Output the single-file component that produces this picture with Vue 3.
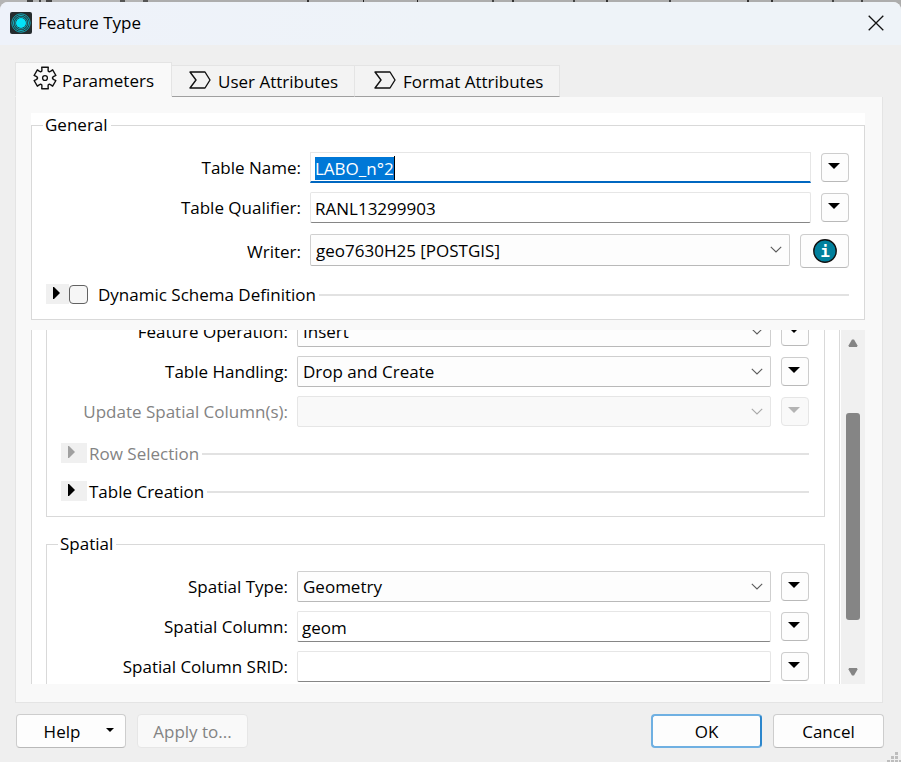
<script setup>
import { onMounted, ref } from 'vue'

const tableName = ref('LABO_n°2')
const tableQualifier = ref('RANL13299903')
const spatialColumn = ref('geom')
const srid = ref('')
const dynamicSchema = ref(false)
const nameInput = ref(null)

const operations = [
  { id: 'feature-operation', label: 'Feature Operation:', value: 'Insert' },
  { id: 'table-handling', label: 'Table Handling:', value: 'Drop and Create' },
  { id: 'update-columns', label: 'Update Spatial Column(s):', value: '', disabled: true }
]

// Outline of a six-toothed gear centred on the origin
function gearPath() {
  const points = []
  for (let i = 0; i < 6; i++) {
    const steps = [[7.6, -25], [9, -20], [11.2, -17], [11.2, 17], [9, 20], [7.6, 25]]
    for (const [r, offset] of steps) {
      const a = ((i * 60 - 90 + offset) * Math.PI) / 180
      points.push(`${(r * Math.cos(a)).toFixed(2)} ${(r * Math.sin(a)).toFixed(2)}`)
    }
  }
  return `M${points.join('L')}Z`
}
const gear = gearPath()

onMounted(() => {
  nameInput.value.focus()
  nameInput.value.select()
})
</script>

<template>
  <div class="backdrop">
    <main class="dialog">
      <header class="titlebar">
        <svg class="app-icon" viewBox="0 0 22 22" aria-hidden="true">
          <rect width="22" height="22" rx="2" fill="#252c2e" />
          <g fill="none" stroke="#12b5c6" stroke-width="0.9">
            <circle cx="11" cy="11" r="9.2" />
            <circle cx="11" cy="11" r="7.6" />
            <circle cx="11" cy="11" r="6" />
          </g>
          <circle cx="11" cy="11" r="5" fill="#05e3f8" />
        </svg>
        <h1>Feature Type</h1>
        <button class="close" type="button" aria-label="Close">
          <svg viewBox="0 0 16 16"><path d="M.7 .7 15.3 15.3M15.3 .7 .7 15.3" /></svg>
        </button>
      </header>

      <div class="content">
        <nav class="tabs" role="tablist">
          <button class="tab active" type="button" role="tab" aria-selected="true">
            <svg class="gear" viewBox="-12 -12 24 24">
              <path :d="gear" />
              <circle r="2.4" />
            </svg>
            <span>Parameters</span>
          </button>
          <button class="tab" type="button" role="tab" aria-selected="false">
            <svg class="tag" viewBox="0 0 22 18"><path d="M1 1H16L21 9 16 17H1L7 9Z" /></svg>
            <span>User Attributes</span>
          </button>
          <button class="tab" type="button" role="tab" aria-selected="false">
            <svg class="tag" viewBox="0 0 22 18"><path d="M1 1H16L21 9 16 17H1L7 9Z" /></svg>
            <span>Format Attributes</span>
          </button>
        </nav>

        <section class="panel">
          <div class="surface">
            <fieldset class="group general">
              <legend>General</legend>
              <div class="rows">
                <div class="row">
                  <label for="table-name">Table Name:</label>
                  <div class="field">
                    <input id="table-name" ref="nameInput" v-model="tableName" class="text focused" type="text" />
                    <span class="caret"></span>
                  </div>
                  <button class="more" type="button" aria-label="Table name options">
                    <svg viewBox="0 0 12 6"><path d="M0 0H12L6 6Z" /></svg>
                  </button>
                </div>
                <div class="row">
                  <label for="table-qualifier">Table Qualifier:</label>
                  <div class="field">
                    <input id="table-qualifier" v-model="tableQualifier" class="text" type="text" />
                  </div>
                  <button class="more" type="button" aria-label="Table qualifier options">
                    <svg viewBox="0 0 12 6"><path d="M0 0H12L6 6Z" /></svg>
                  </button>
                </div>
                <div class="row writer">
                  <label for="writer">Writer:</label>
                  <div class="field">
                    <select id="writer"><option>geo7630H25 [POSTGIS]</option></select>
                    <svg class="chevron" viewBox="0 0 12 7"><path d="M.8 .8 6 6 11.2 .8" /></svg>
                  </div>
                  <button class="info" type="button" aria-label="Writer information">
                    <svg viewBox="0 0 24 24">
                      <circle cx="12" cy="12" r="11.2" />
                      <text x="12" y="18" text-anchor="middle">i</text>
                    </svg>
                  </button>
                </div>
              </div>
              <div class="expander dynamic">
                <button class="toggle" type="button" aria-label="Expand dynamic schema definition">
                  <svg viewBox="0 0 7 12"><path d="M0 0H1L7 6 1 12H0Z" /></svg>
                </button>
                <input id="dynamic" v-model="dynamicSchema" type="checkbox" />
                <label class="caption" for="dynamic">Dynamic Schema Definition</label>
                <span class="line"></span>
              </div>
            </fieldset>
          </div>

          <div class="scroll-area">
            <div class="viewport">
              <fieldset class="group inner continued">
                <div class="rows">
                  <div v-for="item in operations" :key="item.id" class="row" :class="{ disabled: item.disabled }">
                    <label :for="item.id">{{ item.label }}</label>
                    <div class="field">
                      <select :id="item.id" :disabled="item.disabled"><option>{{ item.value }}</option></select>
                      <svg class="chevron" viewBox="0 0 12 7"><path d="M.8 .8 6 6 11.2 .8" /></svg>
                    </div>
                    <button class="more" type="button" :disabled="item.disabled" :aria-label="item.label">
                      <svg viewBox="0 0 12 6"><path d="M0 0H12L6 6Z" /></svg>
                    </button>
                  </div>
                </div>
                <div class="expanders">
                  <div class="expander disabled">
                    <button class="toggle" type="button" disabled aria-labelledby="row-selection">
                      <svg viewBox="0 0 7 12"><path d="M0 0H1L7 6 1 12H0Z" /></svg>
                    </button>
                    <span id="row-selection" class="caption">Row Selection</span>
                    <span class="line"></span>
                  </div>
                  <div class="expander">
                    <button class="toggle" type="button" aria-labelledby="table-creation">
                      <svg viewBox="0 0 7 12"><path d="M0 0H1L7 6 1 12H0Z" /></svg>
                    </button>
                    <span id="table-creation" class="caption">Table Creation</span>
                    <span class="line"></span>
                  </div>
                </div>
              </fieldset>

              <fieldset class="group inner spatial">
                <legend>Spatial</legend>
                <div class="rows">
                  <div class="row">
                    <label for="spatial-type">Spatial Type:</label>
                    <div class="field">
                      <select id="spatial-type"><option>Geometry</option></select>
                      <svg class="chevron" viewBox="0 0 12 7"><path d="M.8 .8 6 6 11.2 .8" /></svg>
                    </div>
                    <button class="more" type="button" aria-label="Spatial type options">
                      <svg viewBox="0 0 12 6"><path d="M0 0H12L6 6Z" /></svg>
                    </button>
                  </div>
                  <div class="row">
                    <label for="spatial-column">Spatial Column:</label>
                    <div class="field">
                      <input id="spatial-column" v-model="spatialColumn" class="text" type="text" />
                    </div>
                    <button class="more" type="button" aria-label="Spatial column options">
                      <svg viewBox="0 0 12 6"><path d="M0 0H12L6 6Z" /></svg>
                    </button>
                  </div>
                  <div class="row">
                    <label for="srid">Spatial Column SRID:</label>
                    <div class="field">
                      <input id="srid" v-model="srid" class="text" type="text" />
                    </div>
                    <button class="more" type="button" aria-label="Spatial column SRID options">
                      <svg viewBox="0 0 12 6"><path d="M0 0H12L6 6Z" /></svg>
                    </button>
                  </div>
                </div>
              </fieldset>
            </div>
            <div class="scrollbar" aria-hidden="true">
              <svg viewBox="0 0 10 8"><path d="M4 .5H6L9.5 6.5 9 8H1L.5 6.5Z" /></svg>
              <div class="track"><div class="thumb"></div></div>
              <svg viewBox="0 0 10 8"><path d="M4 7.5H6L9.5 1.5 9 0H1L.5 1.5Z" /></svg>
            </div>
          </div>
        </section>

        <footer class="actions">
          <button class="btn help" type="button">
            <span>Help</span>
            <svg viewBox="0 0 8 4"><path d="M0 0H8L4 4Z" /></svg>
          </button>
          <button class="btn" type="button" disabled>Apply to...</button>
          <span class="spacer"></span>
          <button class="btn primary" type="button">OK</button>
          <button class="btn" type="button">Cancel</button>
        </footer>
      </div>

      <svg class="grip" viewBox="0 0 14 10" aria-hidden="true">
        <path d="M8 0h3v3h-3zM4 4h3v3h-3zM8 4h3v3h-3zM0 8h3v2h-3zM4 8h3v2h-3zM8 8h3v2h-3zM12 8h2v2h-2z" />
      </svg>
    </main>
  </div>
</template>

<style>
body {
  margin: 0;
}
</style>

<style scoped>
* {
  box-sizing: border-box;
}

.backdrop {
  height: 100vh;
  min-height: 600px;
  padding-top: 2px;
  display: flex;
  background: linear-gradient(90deg,
    #b4b4b4 27px, #444 27px 33px, #b4b4b4 33px 39px, #444 39px 41px, #b4b4b4 41px 46px, #444 46px 52px,
    #b4b4b4 52px 120px, #555 120px 125px, #b4b4b4 125px 143px, #555 143px 148px,
    #adadad 148px 307px, #333 307px 309px, #adadad 309px 363px, #222 363px 364px, #adadad 364px 417px,
    #222 417px 418px, #adadad 418px 492px, #444 492px 494px, #adadad 494px 512px, #333 512px 514px,
    #adadad 514px 573px, #444 573px 575px, #adadad 575px 606px, #333 606px 608px, #adadad 608px 669px,
    #444 669px 671px, #b4b4b4 671px 747px, #333 747px 749px, #adadad 749px 771px, #333 771px 773px,
    #adadad 773px 832px, #444 832px 834px, #adadad 834px 861px, #444 861px 863px, #adadad 863px);
  font-family: "Open Sans", "Noto Sans", sans-serif;
  font-size: 17px;
  line-height: 24px;
  color: #000;
}

button,
input,
select {
  font: inherit;
  color: inherit;
  margin: 0;
}

button {
  padding: 0;
  display: flex;
  align-items: center;
  justify-content: center;
}

.dialog {
  position: relative;
  flex: 1;
  min-width: 0;
  display: flex;
  flex-direction: column;
  background: #efefef;
  border-radius: 8px 8px 0 0;
  overflow: hidden;
}

.titlebar {
  display: flex;
  align-items: center;
  height: 43px;
  padding: 0 17px 2px 10px;
  background: linear-gradient(90deg, #eef2fa, #eef3f8 50%);
}

.app-icon {
  width: 22px;
  height: 22px;
}

h1 {
  flex: 1;
  margin: 0 0 0 6px;
  font-size: 17px;
  font-weight: 400;
}

.close {
  border: 0;
  background: none;
}

.close svg {
  width: 16px;
  height: 16px;
  fill: none;
  stroke: #111;
  stroke-width: 1.3;
}

.content {
  flex: 1;
  min-height: 0;
  display: flex;
  flex-direction: column;
  padding: 17px 18px 14px 15px;
}

.tabs {
  display: flex;
  align-items: flex-end;
}

.tab {
  height: 32px;
  gap: 7px;
  padding: 2px 16px 0 17px;
  background: #f3f3f3;
  border: 1px solid #e4e4e4;
  border-bottom-color: #a0a0a0;
  border-left-width: 0;
}

.tab:last-child {
  padding-left: 19px;
}

.tab.active {
  height: 35px;
  gap: 5px;
  padding: 2px 17px 0 17px;
  background: #f9f9f9;
  border-left-width: 1px;
  border-bottom-color: #f9f9f9;
}

.tab svg {
  fill: none;
  stroke: #111;
  stroke-width: 1.4;
  stroke-linejoin: round;
}

.gear {
  width: 24px;
  height: 24px;
  margin-bottom: 6px;
}

.tag {
  width: 22px;
  height: 18px;
  margin-bottom: 4px;
}

.panel {
  flex: 1;
  min-height: 0;
  display: flex;
  flex-direction: column;
  gap: 10px;
  padding: 16px 17px 18px 15px;
  background: #f9f9f9;
  border: 1px solid #e4e4e4;
  border-top: 0;
}

.surface {
  background: #fff;
}

.group {
  min-width: 0;
  margin: 0;
  padding: 0 15px 15px 14px;
  border: 1px solid #d9d9d9;
}

legend {
  margin-left: -3px;
  padding: 0 3px 0 2px;
}

.general .rows {
  padding-top: 15px;
}

.rows {
  display: flex;
  flex-direction: column;
  gap: 9px;
}

.row {
  display: flex;
  align-items: center;
  gap: 10px;
  height: 31px;
}

.row.writer {
  height: 34px;
  margin-top: 2px;
}

.row > label {
  width: 255px;
  flex: none;
  margin-right: -1px;
  padding-top: 1px;
  text-align: right;
  white-space: nowrap;
}

.inner .row > label {
  width: 227px;
}

.field {
  position: relative;
  flex: 1;
  min-width: 0;
  display: flex;
}

.text,
select {
  width: 100%;
  height: 31px;
  border-radius: 2px;
  outline: 0;
}

.text {
  padding: 2px 4px 0;
  background: #fff;
  border: 1px solid #e6e6e6;
  border-bottom-color: #868686;
}

.text.focused {
  border-bottom: 2px solid #0067c0;
  border-radius: 0;
}

.text::selection {
  color: #fff;
  background: #0078d7;
}

.caret {
  position: absolute;
  left: 84px;
  top: 4px;
  width: 1px;
  height: 24px;
  background: #000;
}

select {
  appearance: none;
  padding: 1px 30px 0 5px;
  background: #fdfdfd;
  border: 1px solid #cfcfcf;
  border-bottom-color: #b9b9b9;
}

.writer select {
  height: 32px;
}

.writer .field {
  align-self: flex-start;
}

select:disabled {
  background: #f9f9f9;
  border-color: #e6e6e6;
  opacity: 1;
}

.chevron {
  position: absolute;
  right: 8px;
  top: 12px;
  width: 12px;
  height: 7px;
  fill: none;
  stroke: #5c5c5c;
  stroke-width: 1.1;
  pointer-events: none;
}

.disabled .chevron {
  stroke: #a8a8a8;
}

.disabled {
  color: #838383;
}

.more {
  width: 28px;
  height: 29px;
  flex: none;
  padding: 0 2px 4px 0;
  background: #fdfdfd;
  border: 1px solid #cdcdcd;
  border-bottom-color: #b9b9b9;
  border-radius: 4px;
}

.more svg {
  width: 12px;
  height: 6px;
}

.more:disabled {
  background: #f9f9f9;
  border-color: #e6e6e6;
}

.more:disabled svg {
  fill: #b4b4b4;
}

.info {
  width: 49px;
  height: 34px;
  flex: none;
  background: #fdfdfd;
  border: 1px solid #cdcdcd;
  border-bottom-color: #b9b9b9;
  border-radius: 4px;
}

.info svg {
  width: 24px;
  height: 24px;
}

.info circle {
  fill: #00809d;
  stroke: #111;
  stroke-width: 1.4;
}

.info text {
  fill: #fff;
  font: 700 16px "DejaVu Sans Mono", monospace;
}

.expander {
  display: flex;
  align-items: center;
  height: 20px;
  white-space: nowrap;
}

.expander.dynamic {
  margin-top: 16px;
}

.expanders {
  display: flex;
  flex-direction: column;
  gap: 18px;
  padding-top: 16px;
}

.caption {
  padding-top: 2px;
}

.toggle {
  width: 26px;
  height: 20px;
  margin-right: 2px;
  padding: 0 6px 2px 0;
  border: 0;
  background: #f0f0f0;
}

.dynamic .toggle {
  width: 23px;
  margin-right: 0;
  padding-right: 2px;
}

.toggle svg {
  width: 7px;
  height: 12px;
}

.toggle:disabled svg {
  fill: #a0a0a0;
}

input[type="checkbox"] {
  appearance: none;
  width: 19px;
  height: 19px;
  margin-right: 10px;
  background: #f6f6f6;
  border: 1px solid #626262;
  border-radius: 4px;
}

.line {
  flex: 1;
  height: 2px;
  margin: 2px 0 0 3px;
  background: #e2e2e2;
}

.scroll-area {
  flex: 1;
  min-height: 0;
  display: flex;
  gap: 1px;
  overflow: hidden;
  background: #fff;
}

.viewport {
  flex: 1;
  min-width: 0;
  padding: 0 14px;
  border: solid #d9d9d9;
  border-width: 0 1px;
  overflow: hidden;
}

/* The list is scrolled part-way into its first group */
.continued {
  margin-top: -14px;
  border-top: 0;
}

.spatial {
  margin-top: 15px;
}

.spatial .rows {
  padding-top: 15px;
}

.scrollbar {
  width: 24px;
  display: flex;
  flex-direction: column;
  align-items: center;
  padding: 9px 0 8px;
  background: #f0f0f0;
}

.scrollbar svg {
  width: 10px;
  height: 8px;
  fill: #858585;
}

.track {
  flex: 1;
  width: 14px;
  display: flex;
  flex-direction: column;
  padding: 66px 0 48px;
}

.thumb {
  flex: 1;
  background: #858585;
  border-radius: 3px;
}

.actions {
  display: flex;
  gap: 11px;
  margin: 0 -1px 0 1px;
  padding-top: 11px;
}

.spacer {
  flex: 1;
}

.btn {
  width: 111px;
  height: 34px;
  padding-top: 1px;
  background: #fdfdfd;
  border: 1px solid #cdcdcd;
  border-bottom-color: #b9b9b9;
  border-radius: 4px;
}

.btn:disabled {
  color: #838383;
  background: #f9f9f9;
  border-color: #e6e6e6;
}

.help {
  width: 110px;
  gap: 26px;
  padding-left: 16px;
}

.help svg {
  width: 8px;
  height: 4px;
  margin-bottom: 3px;
}

.primary {
  border: 2px solid #6fb0e2;
  border-right-color: #2b86cc;
}

.grip {
  position: absolute;
  right: 0;
  bottom: 0;
  width: 14px;
  height: 10px;
  fill: #bdbdbd;
}
</style>
